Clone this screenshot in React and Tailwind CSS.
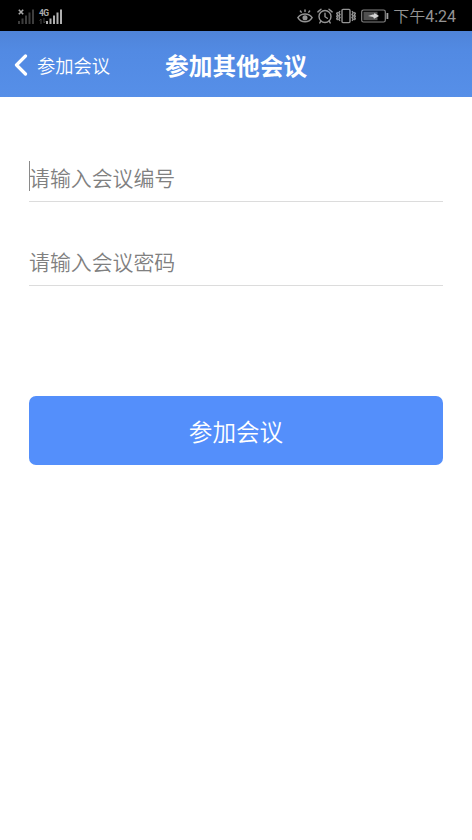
const SignalBars = ({ className }) => (
  <svg viewBox="0 0 17 15" className={className} fill="currentColor">
    <rect x="0" y="12" width="2" height="3" />
    <rect x="3.5" y="9.5" width="2" height="5.5" />
    <rect x="7" y="6.5" width="2" height="8.5" />
    <rect x="10.5" y="3.5" width="2" height="11.5" />
    <rect x="14" y="0.5" width="2" height="14.5" />
  </svg>
);

const EyeIcon = () => (
  <svg viewBox="0 0 16 16" className="size-4" fill="none" stroke="currentColor" strokeWidth="1.5" strokeLinecap="round">
    <path d="M0.9 9.6C4.3 4.8 11.7 4.8 15.1 9.6C11.7 15.2 4.3 15.2 0.9 9.6Z" />
    <circle cx="8" cy="9.8" r="1.8" fill="currentColor" />
    <path d="M8 2V3.5M3.4 3L4.2 4.2M12.6 3L11.8 4.2" />
  </svg>
);

const AlarmIcon = () => (
  <svg viewBox="0 0 16 16" className="size-4" fill="none" stroke="currentColor" strokeWidth="1.4" strokeLinecap="round">
    <circle cx="8" cy="8.5" r="6" />
    <path d="M8 5.3V8.7L10.3 10.3M0.9 3.9L4 1.2M15.1 3.9L12 1.2M3.8 13.2L2.8 14.9M12.2 13.2L13.2 14.9" />
  </svg>
);

const VibrateIcon = () => (
  <svg viewBox="0 0 20 16" className="h-4 w-5" fill="none" stroke="currentColor" strokeWidth="1.4">
    <rect x="6" y="1.4" width="8" height="13.2" rx="1" />
    <path d="M4 3.2L2.8 4.8L4 6.4L2.8 8L4 9.6L2.8 11.2L4 12.8M1.7 4.2L0.7 5.5L1.7 6.9L0.7 8.2L1.7 9.5L0.7 10.8L1.7 12" />
    <path d="M16 3.2L17.2 4.8L16 6.4L17.2 8L16 9.6L17.2 11.2L16 12.8M18.3 4.2L19.3 5.5L18.3 6.9L19.3 8.2L18.3 9.5L19.3 10.8L18.3 12" />
  </svg>
);

const BatteryIcon = () => (
  <svg viewBox="0 0 28 14" className="h-3.5 w-7" fill="none">
    <rect x="0.7" y="1" width="23.6" height="12" rx="1.8" stroke="#858585" strokeWidth="1.2" />
    <rect x="2.5" y="2.8" width="14" height="8.4" fill="#505050" />
    <path d="M26.4 4V10" stroke="#a0a0a0" strokeWidth="1.8" />
    <path d="M7 7L12.5 5.3V6.2L13.5 4L18 7L13 9.7L12.2 7.9L7 7Z" fill="#d5d5d5" />
  </svg>
);

const StatusBar = () => (
  <div className="flex h-[31px] items-center justify-between bg-black pr-4 pl-[18px] text-[#949494]">
    <div className="flex h-4 items-end gap-1">
      <div className="relative flex">
        <SignalBars className="h-[15px] w-[17px] text-[#3d3d3d]" />
        <svg viewBox="0 0 6 6" className="absolute top-0 left-0 size-[6px]" stroke="#aaaaaa" strokeWidth="1.6">
          <path d="M0.8 0.8L5.2 5.2M5.2 0.8L0.8 5.2" />
        </svg>
      </div>
      <div className="flex items-end">
        <div className="flex w-[7px] flex-col items-start">
          <span className="font-['Roboto',sans-serif] text-[8.5px] leading-[9px] font-bold -tracking-[0.6px] text-[#aaaaaa]">4G</span>
          <svg viewBox="0 0 7 6" className="h-1.5 w-[7px]" fill="none" stroke="#444444">
            <path d="M2 6V1L0.5 2.5M5 0V5L6.5 3.5" />
          </svg>
        </div>
        <SignalBars className="h-[15px] w-[17px] text-[#b0b0b0]" />
      </div>
    </div>
    <div className="flex items-center">
      <EyeIcon />
      <span className="ml-1 flex"><AlarmIcon /></span>
      <span className="ml-[3px] flex"><VibrateIcon /></span>
      <span className="ml-[5px] flex"><BatteryIcon /></span>
      <span className="ml-1 pt-0.5 font-['Roboto','Noto_Sans_CJK_SC',sans-serif] text-[16px] leading-5 font-[350]">
        下午<span className="font-normal">4:24</span>
      </span>
    </div>
  </div>
);

const Header = () => (
  <header className="flex h-[66px] items-center bg-linear-to-b from-[#4f84d8] via-[#528ae3] via-30% to-[#568fe8] pt-px pl-[14px] text-white">
    <button className="flex w-[151px] items-center gap-[9px] text-[18.3px] leading-6 font-[350]">
      <svg viewBox="0 0 14 22" className="h-[22px] w-3.5" fill="none" stroke="currentColor" strokeWidth="3.2" strokeLinecap="round" strokeLinejoin="round">
        <path d="M11.5 2L2.5 11L11.5 20" />
      </svg>
      <span>参加会议</span>
    </button>
    <h1 className="text-[23.7px] leading-8 font-bold">参加其他会议</h1>
  </header>
);

const Field = ({ placeholder, focused = false }) => (
  <div className="relative flex h-12 items-center border-b border-[#dcdcdc] pb-0.5">
    {focused && <span className="absolute top-[7px] left-0 h-[30px] w-px bg-[#8a8a8a]" />}
    <input
      type="text"
      placeholder={placeholder}
      className="w-full text-[20.9px] leading-8 font-[350] outline-none placeholder:text-[#808080]"
    />
  </div>
);

const App = () => (
  <div className="min-h-[840px] bg-white font-['Noto_Sans_CJK_SC',sans-serif]">
    <StatusBar />
    <Header />
    <main className="px-[29px] pt-[57px]">
      <div className="flex flex-col gap-9">
        <Field placeholder="请输入会议编号" focused />
        <Field placeholder="请输入会议密码" />
      </div>
      <button className="mt-[110px] flex h-[69px] w-full items-center justify-center rounded-[7px] bg-[#548ffb] pt-0.5 text-[23.6px] font-[350] text-white">
        参加会议
      </button>
    </main>
  </div>
);

export default App;
